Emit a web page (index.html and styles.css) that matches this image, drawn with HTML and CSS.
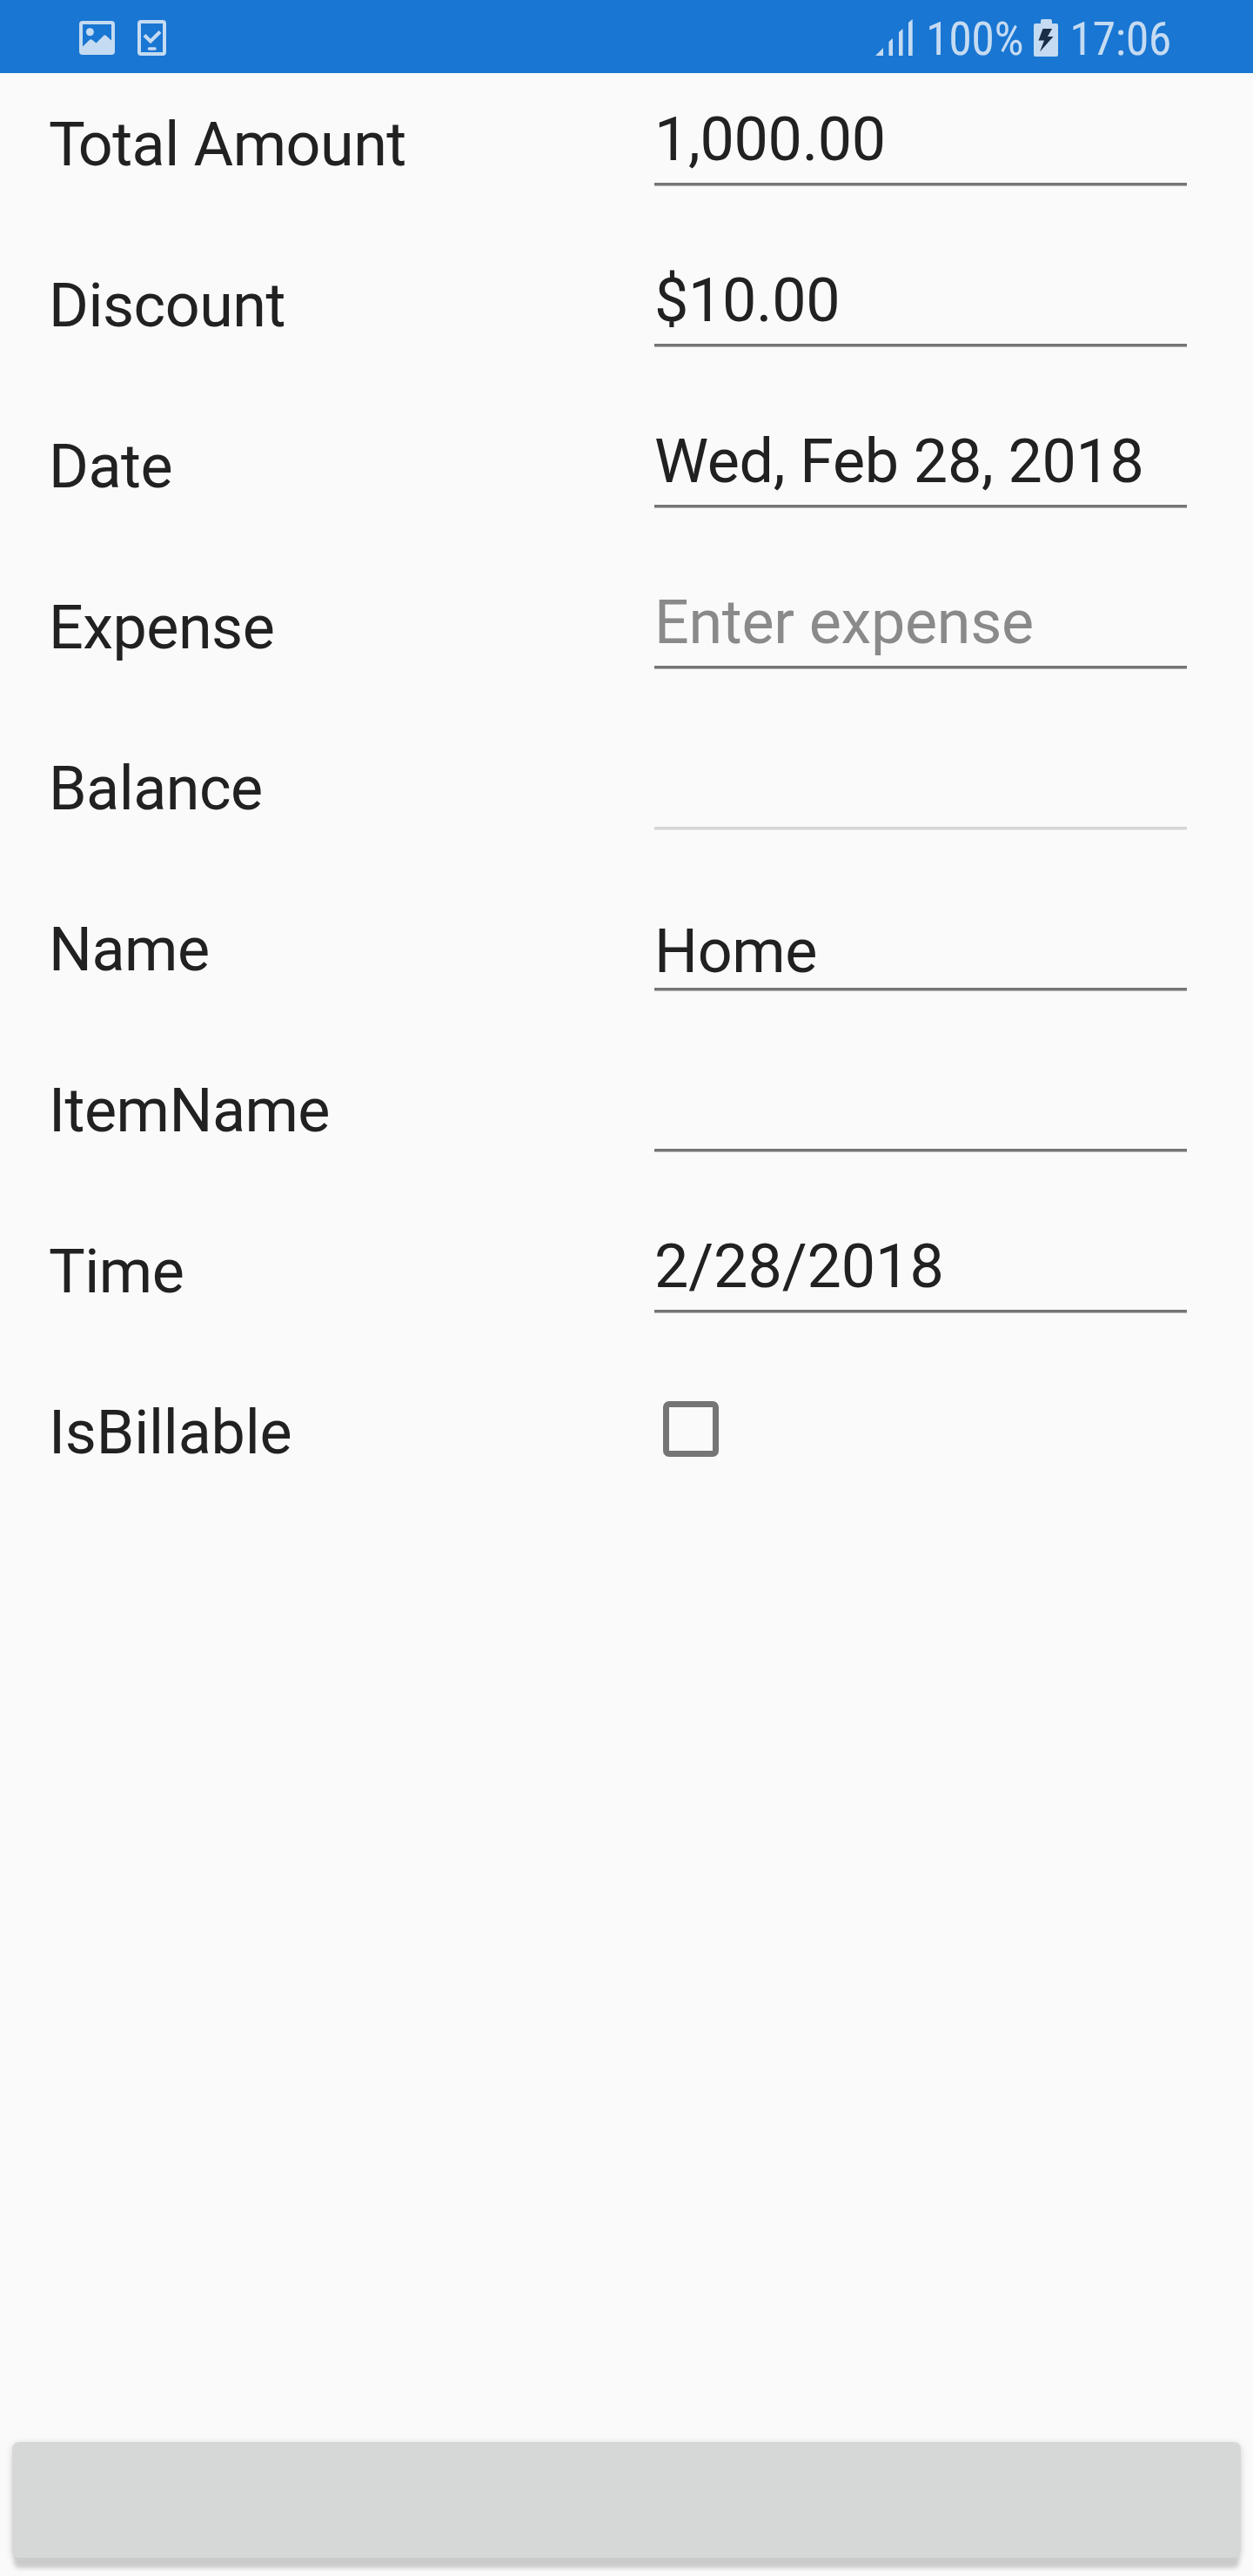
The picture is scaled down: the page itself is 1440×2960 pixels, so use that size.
FILE: index.html
```html
<!DOCTYPE html>
<html lang="en"><head><meta charset="utf-8"><title>Expense</title><link rel="stylesheet" href="styles.css"></head>
<body>
<header class="status">
<svg class="picture" viewBox="0 0 41 39"><path fill-rule="evenodd" d="M4 0H37Q41 0 41 4V35Q41 39 37 39H4Q0 39 0 35V4Q0 0 4 0ZM4 4V29.5L12 21.8Q13.5 20.5 15 21.8L19.5 25.5L28 17Q29.5 15.5 31 17L37 22.5V4Z"/><circle cx="12.4" cy="12.7" r="4.5"/></svg>
<svg class="task" viewBox="0 0 33 41"><rect x="2" y="2" width="29" height="37" rx="2"/><path d="M8 17.5L15 24.5L26 13.5"/><path class="dash" d="M13.5 33H20"/></svg>
<span class="spacer"></span>
<svg class="signal" viewBox="0 0 43 42"><path d="M0 42L9 33V42ZM15.5 26L20 22V42H15.5ZM27 15L31.5 11V42H27ZM38 4L42.7 0V42H38Z"/></svg>
<span class="percent">100%</span>
<svg class="battery" viewBox="0 0 28 43"><path d="M8 2Q8 0 10 0H19Q21 0 21 2V5H26Q28 5 28 7V41Q28 43 26 43H2Q0 43 0 41V7Q0 5 2 5H8Z"/><path class="bolt" d="M10.5 11H21L16 20H22.5L7 37.5L12 24.5H5.5Z"/></svg>
<span class="clock">17:06</span>
</header>
<main class="form">
<div class="row"><span class="label"><span class="kern">T</span>otal Amount</span><div class="field">1,000.00</div></div>
<div class="row"><span class="label">Discount</span><div class="field">$10.00</div></div>
<div class="row"><span class="label">Date</span><div class="field">Wed, Feb 28, 2018</div></div>
<div class="row"><span class="label">Expense</span><div class="field hint">Enter expense</div></div>
<div class="row"><span class="label">Balance</span><div class="field disabled"></div></div>
<div class="row"><span class="label">Name</span><div class="field low">Home</div></div>
<div class="row"><span class="label">ItemName</span><div class="field"></div></div>
<div class="row"><span class="label">Time</span><div class="field time">2/28/2018</div></div>
<div class="row"><span class="label billable">IsBillable</span><div class="check"></div></div>
</main>
<footer class="bottom"><button class="action" type="button"></button></footer>
</body></html>
```
FILE: styles.css
```css
*{box-sizing:border-box}
body{margin:0;height:2960px;display:flex;flex-direction:column;background:#fafafa;color:#212121;font-family:Roboto,sans-serif;overflow:hidden}
.status{height:84px;flex:none;display:flex;align-items:center;background:#1976d2;color:#c5dbf2;fill:#c5dbf2;padding:2px 94px 0 91px;font-size:54px}
.status svg{flex:none}
.picture{width:41px;height:39px}
.task{width:33px;height:41px;margin-left:26px;fill:none;stroke:#c5dbf2;stroke-width:4}
.dash{stroke-width:3.6;stroke-linecap:round}
.spacer{flex:1}
.signal{width:43px;height:42px}
.percent,.clock{font-stretch:condensed;letter-spacing:-.5px;padding-top:3px;white-space:nowrap}
.percent{width:139px;padding-left:15px}
.clock{width:130px;text-align:right}
.battery{width:28px;height:43px}
.bolt{fill:#1a2e47}
.form{flex:1}
.row{height:185px;display:flex;padding:0 76px 0 56px}
.label{width:696px;font-size:70px;line-height:82px;padding-top:41px;letter-spacing:-.5px}
.billable{letter-spacing:-.2px}
.kern{letter-spacing:-8px}
.field{width:612px;height:129px;border-bottom:3px solid #757575;box-shadow:0 1px 0 #b5b5b5;font-size:70px;line-height:82px;padding-top:35px;letter-spacing:-.3px}
.time{letter-spacing:-.05px}
.hint{color:#8a8a8a}
.disabled{border-color:#d6d6d6;box-shadow:0 1px 0 #e8e8e8}
.low{padding-top:43px}
.check{width:64px;height:64px;border:7px solid #757575;border-radius:7px;margin:46px 0 0 10px}
.bottom{padding:0 14px 21px}
.action{display:block;width:100%;height:133px;border:0;border-radius:8px;background:#d6d8d7;box-shadow:0 14px 5px -2px #cbcbcb,0 2px 8px rgba(0,0,0,.16)}
```
